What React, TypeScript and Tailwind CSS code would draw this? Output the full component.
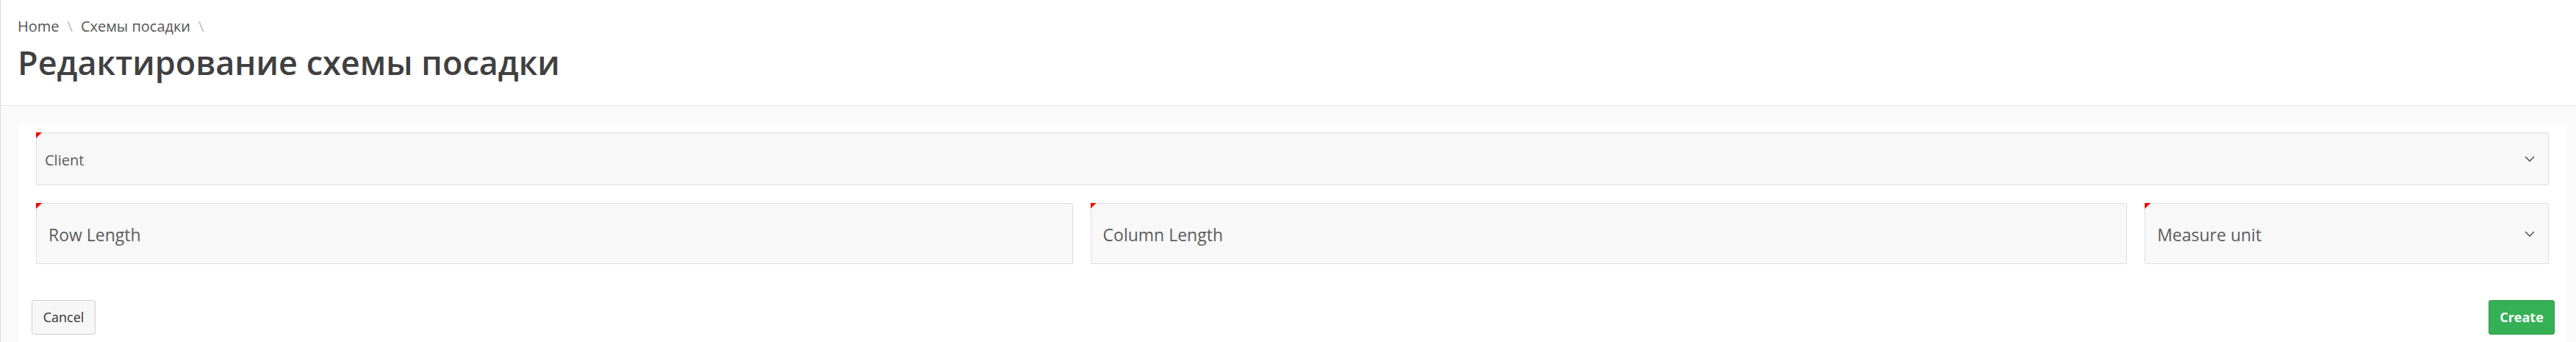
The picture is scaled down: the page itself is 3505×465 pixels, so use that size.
const fontStack = "font-['Open_Sans','Noto_Sans',sans-serif]";

function Corner() {
  return (
    <span className="absolute -left-px -top-px h-[8px] w-[8px] bg-[#ff0000] [clip-path:polygon(0_0,100%_0,0_100%)]" />
  );
}

function Chevron() {
  return (
    <svg width="14" height="8" viewBox="0 0 14 8" fill="none" className="shrink-0">
      <path d="M1 1l6 6 6-6" stroke="#444" strokeWidth="1.4" />
    </svg>
  );
}

function SelectBox({ label, small, className }: { label: string; small?: boolean; className?: string }) {
  return (
    <div
      className={
        "relative flex items-center justify-between rounded-[2px] border border-[#dedede] bg-[#f8f8f8] pr-[18px] text-[#5c5c5c] " +
        (className ?? "")
      }
    >
      <Corner />
      <span className={small ? "pl-[11px] pt-[2px] text-[20px] leading-[27px]" : "pl-[16px] pt-[4px] text-[23px] leading-[31px]"}>
        {label}
      </span>
      <Chevron />
    </div>
  );
}

function InputBox({ label }: { label: string }) {
  return (
    <div className="relative col-span-5 flex h-[83px] items-center rounded-[2px] border border-[#dedede] bg-[#f8f8f8] pl-[16px] pt-[4px] text-[23px] leading-[31px] text-[#5c5c5c]">
      <Corner />
      <span>{label}</span>
    </div>
  );
}

export default function App() {
  return (
    <div className={`min-h-screen border-l border-[#d9d9d9] bg-[#fafafa] ${fontStack}`}>
      <header className="border-b border-[#e6e6e6] bg-white pb-[30px] pl-[23px] pt-[22px]">
        <nav className="flex items-center text-[20px] leading-[28px] text-[#555]">
          <span>Home</span>
          <span className="px-[11px] text-[#bbb]">\</span>
          <span>Схемы посадки</span>
          <span className="px-[11px] text-[#bbb]">\</span>
        </nav>
        <h1 className="mt-[7px] text-[45px] font-semibold leading-[56px] text-[#404040]">
          Редактирование схемы посадки
        </h1>
      </header>

      <main className="pl-6 pr-[13px] pt-6">
        <div className="bg-white px-6 pb-6 pt-3">
          <SelectBox label="Client" small className="h-[72px]" />

          <div className="mt-6 grid grid-cols-12 gap-x-6">
            <InputBox label="Row Length" />
            <InputBox label="Column Length" />
            <SelectBox label="Measure unit" className="col-span-2 h-[83px]" />
          </div>

          <div className="-ml-[6px] -mr-[8px] mt-[49px] flex items-center justify-between">
            <button className="h-[47px] w-[87px] rounded-[3px] border border-[#cfcfcf] bg-[#f7f7f7] text-[18px] text-[#333]">
              Cancel
            </button>
            <button className="h-[47px] w-[90px] rounded-[3px] border border-[#2e9d4a] bg-[#35b055] text-[18px] font-bold text-white">
              Create
            </button>
          </div>
        </div>
      </main>
    </div>
  );
}
